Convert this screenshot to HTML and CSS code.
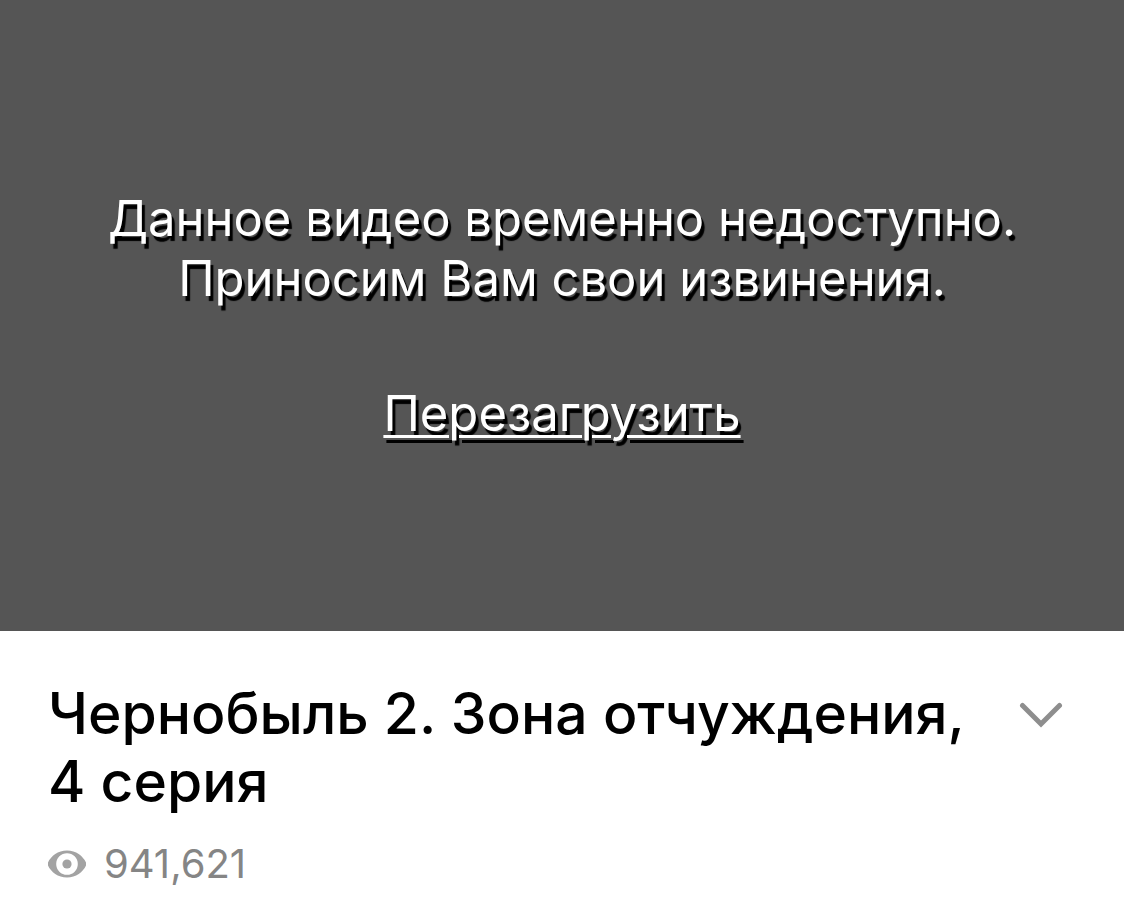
FILE: index.html
```html
<!DOCTYPE html>
<html lang="ru">
<head>
<meta charset="utf-8">
<meta name="viewport" content="width=device-width, initial-scale=1">
<title>Чернобыль 2. Зона отчуждения, 4 серия</title>
<link rel="stylesheet" href="styles.css">
</head>
<body>
<main>
  <section class="player">
    <p class="message">Данное видео временно недоступно.<br>Приносим Вам свои извинения.</p>
    <a class="reload" href="#">Перезагрузить</a>
  </section>
  <section class="info">
    <div class="heading">
      <h1 class="title">Чернобыль 2. Зона отчуждения, 4 серия</h1>
      <button class="expand" type="button" aria-label="Подробнее">
        <svg width="44" height="28" viewBox="0 0 44 28" aria-hidden="true"><path d="M3.5 4.5 22 23 40.5 4.500" fill="none" stroke="#8e8e8e" stroke-width="5" stroke-linecap="round"/></svg>
      </button>
    </div>
    <div class="views">
      <svg width="38" height="28" viewBox="1 0 38 28" aria-hidden="true"><path fill="#a3a3a3" fill-rule="evenodd" d="M20 .5C11 .5 4 6 1 12.5Q.3 14 1 15.500C4 22 11 27.500 20 27.500S36 22 39 15.500Q39.700 14 39 12.500C36 6 29 .5 20 .5Zm0 2.700a10.800 10.800 0 1 1 0 21.600 10.800 10.800 0 0 1 0-21.600Z"/><circle cx="20" cy="14" r="4.600" fill="#a3a3a3"/></svg>
      <span>941,621</span>
    </div>
  </section>
</main>
</body>
</html>
```
FILE: styles.css
```css
* { box-sizing: border-box; }
body { margin: 0; background: #fff; color: #000; font-family: Inter, "Liberation Sans", sans-serif; }
.player { display: flex; flex-direction: column; align-items: center; padding: 189px 24px 187px; background: #555; color: #fff; font-size: 49px; line-height: 60px; text-align: center; text-shadow: 3px 5px 1px #000; }
.message { margin: 0 0 75px; }
.reload { color: inherit; text-underline-offset: 4px; text-decoration-thickness: 3px; }
.info { padding: 49px 48px 24px; }
.heading { display: flex; align-items: flex-start; justify-content: space-between; gap: 16px; }
.title { flex: 1; margin: 0; font-size: 57px; line-height: 68px; font-weight: 500; }
.expand { display: flex; padding: 21px 13px 20px 0; border: 0; background: none; cursor: pointer; }
.views { display: flex; align-items: center; gap: 18px; margin-top: 23px; color: #858585; font-size: 40px; line-height: 50px; }
```
